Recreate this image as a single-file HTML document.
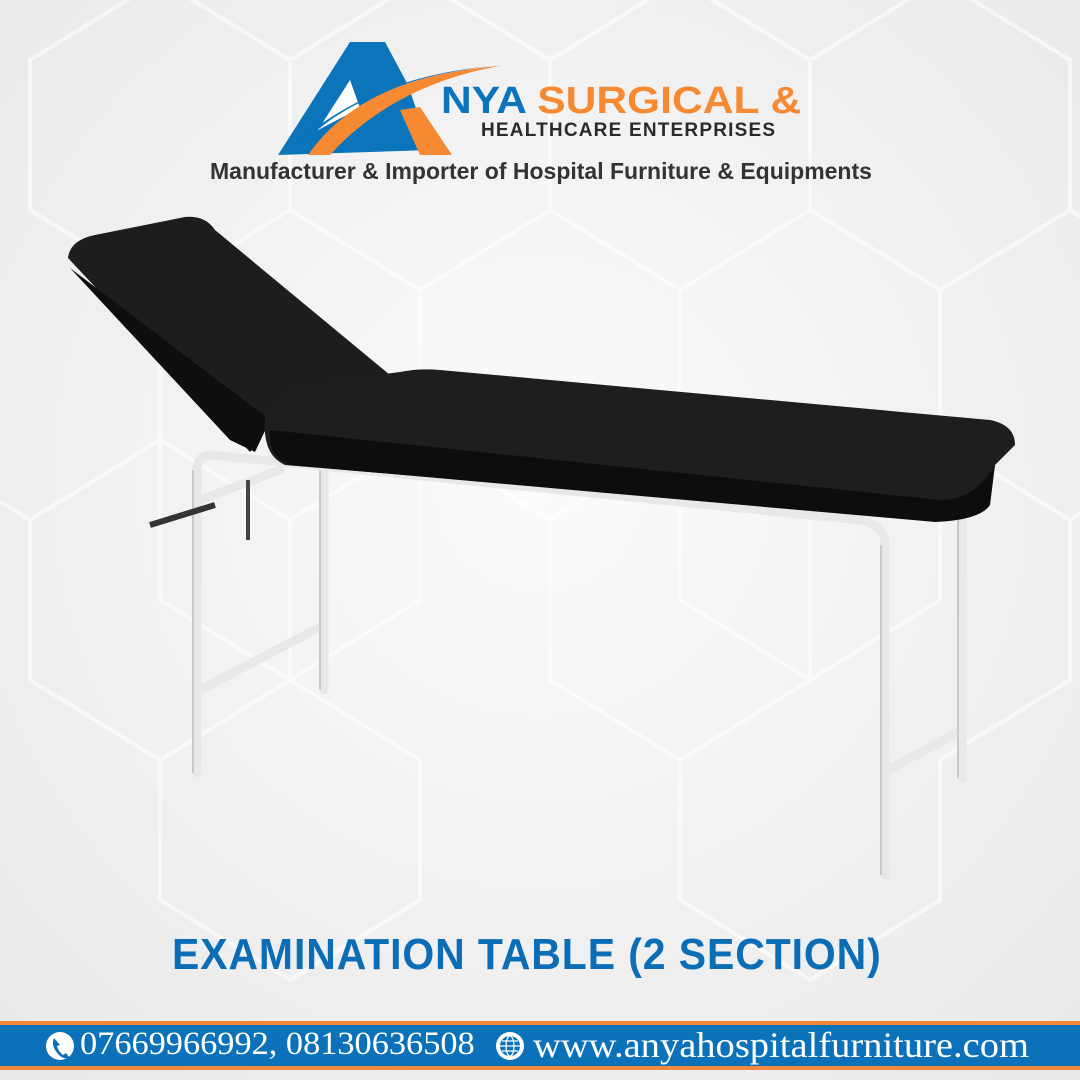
<!DOCTYPE html>
<html><head><meta charset="utf-8"><style>
body{margin:0;width:1080px;height:1080px;overflow:hidden;background:#f4f4f4;position:relative;font-family:"Liberation Sans",sans-serif}
.t{position:absolute;white-space:nowrap}
</style></head><body>
<svg width="1080" height="1080" style="position:absolute;left:0;top:0">
<defs><radialGradient id="g" cx="50%" cy="45%" r="70%"><stop offset="0" stop-color="#fbfbfb"/><stop offset="1" stop-color="#e9e9e9"/></radialGradient></defs>
<rect width="1080" height="1080" fill="url(#g)"/>
<g stroke="#ffffff" stroke-width="4" fill="none" opacity="0.6">
<path d="M160 -20 L290 60 L290 210 L160 290 L30 210 L30 60 Z"/>
<path d="M420 -20 L550 60 L550 210 L420 290 L290 210 L290 60Z"/>
<path d="M680 -20 L810 60 L810 210 L680 290 L550 210 L550 60Z"/>
<path d="M940 -20 L1070 60 L1070 210 L940 290 L810 210 L810 60Z"/>
<path d="M30 210 L160 290 L160 440 L30 520 L-100 440"/>
<path d="M290 210 L420 290 L420 440 L290 520 L160 440"/>
<path d="M550 210 L680 290 L680 440 L550 520 L420 440"/>
<path d="M810 210 L940 290 L940 440 L810 520 L680 440"/>
<path d="M1070 210 L1200 290 L1200 440 L1070 520 L940 440"/>
<path d="M160 440 L160 600 L290 680 L420 600 L420 440"/>
<path d="M680 440 L680 600 L810 680 L940 600 L940 440"/>
<path d="M30 520 L30 680 L160 760 L290 680 L290 520"/>
<path d="M550 520 L550 680 L680 760 L810 680 L810 520"/>
<path d="M1070 520 L1070 680 L940 760"/>
<path d="M160 760 L160 900 L290 980 L420 900 L420 760 L290 680"/>
<path d="M680 760 L680 900 L810 980 L940 900 L940 760"/>
</g>
<!-- logo -->
<path d="M278 155 L350 42 L385 42 L408 85 L430 150 Z" fill="#0b74bb"/>
<path d="M318 130 L350 80 L360 108 Z" fill="#fff"/>
<path d="M308 155 C350 95 420 72 500 66 C430 78 370 110 330 155 Z" fill="#f68a33"/>
<path d="M300 140 C360 90 430 70 505 65 C430 70 360 95 320 128Z" fill="#0b74bb"/>
<path d="M400 110 L420 155 L452 155 L420 107 Z" fill="#f68a33"/>
<!-- table legs -->
<g stroke="#e8e8ea" stroke-width="9" fill="none" stroke-linecap="round">
<path d="M197 773 L197 470 Q197 455 212 455 L860 520 Q885 525 885 545 L885 875"/>
<path d="M324 690 L324 470"/>
<path d="M962 778 L962 510"/>
<path d="M200 690 L324 625"/>
<path d="M888 770 L962 730"/>
<path d="M200 500 L280 470"/>
</g>
<g stroke="#c9c9cc" stroke-width="2" fill="none">
<path d="M193 773 L193 470"/><path d="M320 690 L320 470"/><path d="M881 875 L881 545"/><path d="M958 778 L958 510"/>
</g>
<path d="M150 525 L215 505" stroke="#333" stroke-width="6"/>
<path d="M248 480 L248 540" stroke="#444" stroke-width="4"/>
<!-- mattress -->
<path d="M68 258 Q70 240 95 235 L185 217 Q205 215 215 230 L390 375 L272 415 Q260 440 250 452 Z" fill="#1b1d1e"/>
<path d="M70 268 L230 440 L255 452 L270 420 Z" fill="#0d0e0f"/>
<path d="M265 418 Q272 395 300 385 L400 372 Q420 368 440 370 L990 420 Q1015 425 1015 445 L995 465 Q990 505 970 510 L940 520 L285 465 Q262 455 265 418 Z" fill="#1c1e1f"/>
<path d="M270 430 L940 500 Q975 500 995 465 L990 505 Q980 520 935 522 L290 465 Q268 458 270 430Z" fill="#0c0d0e"/>
<!-- footer -->
<rect x="0" y="1021" width="1080" height="49" fill="#f4883a"/>
<rect x="0" y="1025" width="1080" height="41" fill="#0b72b9"/>
<circle cx="60" cy="1046" r="14" fill="#fff"/>
<path d="M54 1038 q-4 8 6 18 q6 4 9 1 l-3-4 l-3 2 q-5-4-6-9 l3-1 z" fill="#0b72b9"/>
<circle cx="510" cy="1046" r="14" fill="#fff"/>
<circle cx="510" cy="1046" r="10" fill="#0b72b9"/>
<g stroke="#fff" stroke-width="1.3" fill="none"><ellipse cx="510" cy="1046" rx="4" ry="10"/><path d="M500 1046h20M502 1041h16M502 1051h16"/></g>
</svg>
<div class="t" style="left:441px;top:80px;font-size:38px;font-weight:bold;color:#0b74bb;transform:scaleX(1.12);transform-origin:left">NYA <span style="color:#f68a33">SURGICAL &amp;</span></div>
<div class="t" style="left:481px;top:120px;font-size:19px;font-weight:bold;color:#2a2a2a;letter-spacing:1.2px">HEALTHCARE ENTERPRISES</div>
<div class="t" style="left:210px;top:158px;font-size:23px;font-weight:bold;color:#333">Manufacturer &amp; Importer of Hospital Furniture &amp; Equipments</div>
<div class="t" style="left:172px;top:930px;font-size:44px;font-weight:bold;color:#0a6db6;transform:scaleX(0.93);transform-origin:left;letter-spacing:1px">EXAMINATION TABLE (2 SECTION)</div>
<div class="t" style="left:80px;top:1026px;font-family:'Liberation Serif',serif;font-size:33px;color:#fff;transform:scaleX(1.04);transform-origin:left">07669966992, 08130636508</div>
<div class="t" style="left:533px;top:1024px;font-family:'Liberation Serif',serif;font-size:36px;color:#fff;transform:scaleX(1.07);transform-origin:left">www.anyahospitalfurniture.com</div>
</body></html>
